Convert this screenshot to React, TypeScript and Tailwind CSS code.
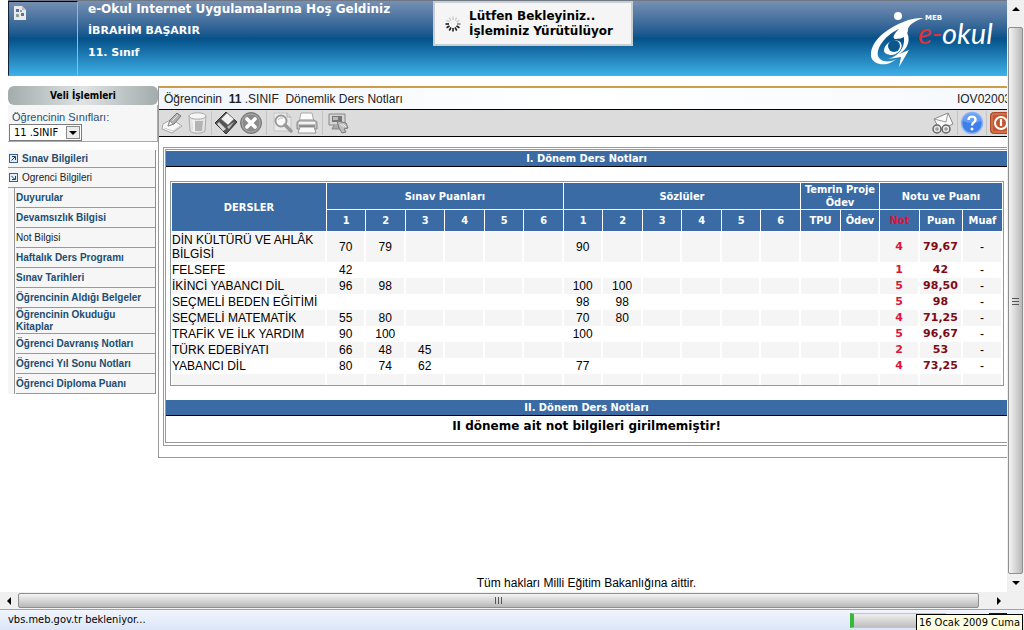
import React from "react";

const TAHOMA = "font-['DejaVu_Sans_Condensed','DejaVu_Sans',sans-serif]";
const VERDANA = "font-['DejaVu_Sans',sans-serif]";

type Grade = {
  course: string;
  exams: string[];
  orals: string[];
  mark: string;
  score: string;
};

const grades: Grade[] = [
  { course: "DİN KÜLTÜRÜ VE AHLÂK BİLGİSİ", exams: ["70", "79"], orals: ["90"], mark: "4", score: "79,67" },
  { course: "FELSEFE", exams: ["42"], orals: [], mark: "1", score: "42" },
  { course: "İKİNCİ YABANCI DİL", exams: ["96", "98"], orals: ["100", "100"], mark: "5", score: "98,50" },
  { course: "SEÇMELİ BEDEN EĞİTİMİ", exams: [], orals: ["98", "98"], mark: "5", score: "98" },
  { course: "SEÇMELİ MATEMATİK", exams: ["55", "80"], orals: ["70", "80"], mark: "4", score: "71,25" },
  { course: "TRAFİK VE İLK YARDIM", exams: ["90", "100"], orals: ["100"], mark: "5", score: "96,67" },
  { course: "TÜRK EDEBİYATI", exams: ["66", "48", "45"], orals: [], mark: "2", score: "53" },
  { course: "YABANCI DİL", exams: ["80", "74", "62"], orals: ["77"], mark: "4", score: "73,25" },
];

const slots = [0, 1, 2, 3, 4, 5];

const subMenu = [
  "Duyurular",
  "Devamsızlık Bilgisi",
  "Not Bilgisi",
  "Haftalık Ders Programı",
  "Sınav Tarihleri",
  "Öğrencinin Aldığı Belgeler",
  "Öğrencinin Okuduğu Kitaplar",
  "Öğrenci Davranış Notları",
  "Öğrenci Yıl Sonu Notları",
  "Öğrenci Diploma Puanı",
];

function Logo() {
  return (
    <svg className="h-[68px] w-[130px]" viewBox="0 0 130 68" role="img" aria-label="MEB e-okul">
      <circle cx="35" cy="15" r="4" fill="#fff" />
      <path d="M61 17C49 16 35 22 25 29C14 36 7 46 8 55C9 63 20 65 27 62L34 58C26 62 17 61 15 55C13 46 24 33 36 28C31 33 29 37 32 38C40 38 45 35 45 28C46 23 54 19 61 17Z" fill="#fff" />
      <path d="M43 30C48 37 46 48 36 53L46 49L36 66L38 56L25 58C36 55 42 47 41 36Z" fill="#fff" />
      <path d="M21 49C22 41 34 36 38 42C41 48 33 55 27 54C23 53 21 52 21 49Z" fill="#fff" />
      <circle cx="31" cy="45" r="6" fill="#0b578d" />
      <text x="62" y="19" fill="#fff" fontSize="7" fontFamily="DejaVu Sans" fontWeight="bold">MEB</text>
      <text x="55" y="43" fontSize="29" fontFamily="Lato, sans-serif" fontStyle="italic">
        <tspan fill="#e0313c">e-</tspan><tspan fill="#fff">okul</tspan>
      </text>
    </svg>
  );
}

function Spinner() {
  const rays = Array.from({ length: 12 }, (_, i) => i);
  return (
    <svg className="h-4 w-4" viewBox="0 0 16 16">
      {rays.map((i) => (
        <line key={i} x1="8" y1="4" x2="8" y2="0.500" stroke="#111" strokeWidth="1.600"
          opacity={i > 3 && i < 10 ? 0.95 : i === 3 ? 0.5 : 0.15} transform={`rotate(${i * 30} 8 8)`} />
      ))}
    </svg>
  );
}

function Icon({ children }: { children: React.ReactNode }) {
  return <svg className="h-6 w-6" viewBox="0 0 24 24">{children}</svg>;
}

const icons = {
  edit: (
    <Icon>
      <path d="M3 13L12 8L22 15L12 22L2 18Z" fill="#f7f7f7" stroke="#a5a5a5" />
      <path d="M4 17L13 20L20 15" fill="none" stroke="#ccc" />
      <path d="M8 15L10 9L17 2L21 5L14 13Z" fill="#b0b0b0" stroke="#777" />
      <path d="M8 15L10 10L13 13Z" fill="#eee" stroke="#888" strokeWidth=".7" />
      <path d="M12 10L18 4" stroke="#ddd" />
    </Icon>
  ),
  bin: (
    <Icon>
      <path d="M4 5L5 20C7 23 18 23 20 20L21 5Z" fill="#e4e4e4" stroke="#aaa" />
      <path d="M7 10H18L17 20H8Z" fill="#b4b4b4" />
      <path d="M7 9L8 21H10V9Z" fill="#f2f2f2" />
      <ellipse cx="12.500" cy="5" rx="8.500" ry="3.200" fill="#f5f5f5" stroke="#aaa" />
    </Icon>
  ),
  save: (
    <Icon>
      <path d="M12 1L23 11L12 23L1 12Z" fill="#555" stroke="#333" />
      <path d="M13 2L20 8L14 14L7 8Z" fill="#f1f1f1" stroke="#777" strokeWidth=".6" />
      <path d="M5 11L12 18L9 20L3 13Z" fill="#d8d8d8" />
      <path d="M17 13L20 11L15 18L13 16Z" fill="#bbb" />
    </Icon>
  ),
  cancel: (
    <Icon>
      <circle cx="12" cy="12" r="10.500" fill="#8b8b8b" stroke="#777" />
      <circle cx="12" cy="12" r="9" fill="none" stroke="#aaa" />
      <path d="M8 8L16 16M16 8L8 16" stroke="#fff" strokeWidth="3.600" strokeLinecap="round" />
    </Icon>
  ),
  preview: (
    <Icon>
      <path d="M4 2H17L21 6V20H4Z" fill="#eaeaea" stroke="#c5c5c5" />
      <path d="M17 2V6H21" fill="none" stroke="#aaa" />
      <circle cx="11" cy="10" r="5.500" fill="#fafafa" stroke="#9a9a9a" strokeWidth="2" />
      <path d="M8 9Q10 6 13 7" fill="none" stroke="#bbb" />
      <path d="M15 14L21 20" stroke="#999" strokeWidth="3.500" strokeLinecap="round" />
    </Icon>
  ),
  print: (
    <Icon>
      <path d="M6 2H17L19 11H4Z" fill="#fbfbfb" stroke="#aaa" />
      <path d="M2 11L5 9H19L22 11V18H2Z" fill="#c2c2c2" stroke="#888" />
      <path d="M4 12H20" stroke="#f3f3f3" strokeWidth="2" />
      <path d="M5 16H19L21 22H3Z" fill="#fafafa" stroke="#999" />
      <path d="M4 15H20" stroke="#666" />
    </Icon>
  ),
  transfer: (
    <Icon>
      <path d="M3 3H19V14H3Z" fill="#d5d5d5" stroke="#888" />
      <path d="M6 5H16V11H6Z" fill="#777" />
      <path d="M7 6H12V9H7Z" fill="#bbb" />
      <path d="M8 14L6 18H14V14" fill="#aaa" stroke="#888" />
      <path d="M11 10L20 12L22 17L18 18L20 21L16 22L13 17Z" fill="#bdbdbd" stroke="#777" />
      <path d="M14 13L18 16M17 13L20 16" stroke="#eee" />
    </Icon>
  ),
  find: (
    <Icon>
      <path d="M3 8L17 2L22 13L9 19Z" fill="#fafafa" stroke="#888" />
      <path d="M3 8L15 11L17 2" fill="none" stroke="#999" />
      <circle cx="6" cy="18" r="4" fill="#e5e5e5" stroke="#666" strokeWidth="1.500" />
      <circle cx="15" cy="18" r="4" fill="#e5e5e5" stroke="#666" strokeWidth="1.500" />
      <path d="M6 16V20M4 18H8M15 16V20M13 18H17" stroke="#888" />
    </Icon>
  ),
  help: (
    <Icon>
      <circle cx="12" cy="12" r="10.500" fill="#3f7fea" stroke="#8bb4f6" strokeWidth="1.500" />
      <path d="M3 10A9 9 0 0 1 21 10Q12 14 3 10Z" fill="#82b0fa" opacity=".6" />
      <path d="M8.500 9C8.500 4.500 15.800 4.500 15.500 9C15.300 11.500 12 11.500 12 14.500" fill="none" stroke="#fff" strokeWidth="2.400" />
      <circle cx="12" cy="18" r="1.500" fill="#fff" />
    </Icon>
  ),
  exit: (
    <Icon>
      <rect x="1.500" y="1.500" width="21" height="21" rx="3" fill="#c2562f" stroke="#a9482a" />
      <rect x="3" y="3" width="18" height="18" rx="2" fill="none" stroke="#dd8a68" />
      <circle cx="12" cy="12" r="6" fill="none" stroke="#fff" strokeWidth="2" />
      <path d="M12 8V15" stroke="#fff" strokeWidth="2.200" />
    </Icon>
  ),
};

function Tool({ label, children }: { label: string; children: React.ReactNode }) {
  return <button type="button" aria-label={label} className="flex h-6 w-6 items-center justify-center">{children}</button>;
}

function Divider() {
  return <span className="block h-6 w-px bg-[#c4c4c4]" />;
}

function Header() {
  return (
    <header className="flex h-[76px] border-t border-[#6f7782] bg-linear-to-b from-[#7790b3] via-[#045289] to-[#3fb2ea] text-white">
      <div className="flex w-[70px] items-start border border-t-black border-r-[#a5b5c5] border-b-transparent border-l-[#10243a] p-1">
        <svg className="h-[14px] w-[13px]" viewBox="0 0 13 14" role="img" aria-label="Fotoğraf">
          <path d="M1 0H9L13 4V14H1Z" fill="#e9e9e9" />
          <path d="M9 0V4H13" fill="#bbb" />
          <path d="M3 3H6V6H3ZM8 7H11V10H8Z" fill="#4a7aa8" />
          <path d="M3 8H6V11H3ZM7 4H9V6H7Z" fill="#8d9c97" />
        </svg>
      </div>
      <div className={`${VERDANA} flex flex-1 flex-col gap-1.5 pl-[10px] text-[11px] leading-4 font-bold`}>
        <p className="text-[12px] leading-4">e-Okul Internet Uygulamalarına Hoş Geldiniz</p>
        <p>İBRAHİM BAŞARIR</p>
        <p>11. Sınıf</p>
      </div>
      <div className="pr-[14px]"><Logo /></div>
    </header>
  );
}

function Marker({ open }: { open?: boolean }) {
  return (
    <svg className="h-[9px] w-[9px] shrink-0" viewBox="0 0 9 9">
      <rect x=".5" y=".5" width="8" height="8" fill="#e3edf7" stroke="#3b5f86" />
      {open ? <path d="M2.500 3L6 6.500M6.500 3V6.500H3" fill="none" stroke="#1d3f6b" /> : <path d="M2.500 6.500L6 3M3 2.500H6.500V6" fill="none" stroke="#1d3f6b" />}
    </svg>
  );
}

function Sidebar() {
  return (
    <aside className="w-[150px] shrink-0">
      <h2 className={`${TAHOMA} flex h-[19px] items-center justify-center rounded-md bg-linear-to-r from-[#a3acac] via-[#dfe4e3] to-[#a3acac] text-[10px] font-bold text-black`}>
        Veli İşlemleri
      </h2>
      <div className="flex h-[37px] flex-col items-start justify-end border-r border-b border-[#aaa] bg-[#f6f6f6] pl-px">
        <label htmlFor="sinif" className="pl-[3px] font-['Liberation_Sans',sans-serif] text-[11px] leading-[13px] text-[#1f4f78]">
          Öğrencinin Sınıfları:
        </label>
        <div className="relative h-[17px] w-[73px]">
          <select id="sinif" className={`${TAHOMA} block h-full w-full appearance-none border border-[#7a7a7a] bg-white pl-1 text-[11px] leading-[13px] text-black`}>
            <option>11 .SINIF</option>
          </select>
          <svg className="pointer-events-none absolute top-0.5 right-0.5 h-[13px] w-[14px]" viewBox="0 0 14 13">
            <rect x=".5" y=".5" width="13" height="12" fill="#ececec" stroke="#888" />
            <path d="M3 5H11L7 9Z" fill="#000" />
          </svg>
        </div>
      </div>
      <nav className="mt-2 mr-0.5 border-r border-[#8f8f8f] bg-[#f6f6f6] font-['Liberation_Sans',sans-serif] text-[10px] leading-3 font-bold text-[#204d72]">
        <a href="#sinav" className="flex h-[18px] items-center gap-1 border-b border-[#999] pl-px">
          <Marker />Sınav Bilgileri
        </a>
        <a href="#ogrenci" className="flex h-5 items-center gap-1 border-b border-[#999] pl-px font-normal text-[#222]">
          <Marker open />Ogrenci Bilgileri
        </a>
        <ul className="ml-[6px] border-l border-[#999] pl-px">
          {subMenu.map((item) => (
            <li key={item}>
              <a
                href="#menu"
                className={
                  item === "Not Bilgisi"
                    ? "flex min-h-5 items-center border-b border-[#999] pt-px font-normal text-[#222]"
                    : "flex min-h-5 items-center border-b border-[#999] pt-px"
                }
              >
                {item}
              </a>
            </li>
          ))}
        </ul>
      </nav>
    </aside>
  );
}

const TH = "border-r border-b border-white p-0 font-bold";

function GradeTable() {
  return (
    <table className="w-full table-fixed border-separate border-spacing-0 border border-[#8f979f] pt-px pl-px font-['Liberation_Sans',sans-serif] text-[12px] leading-[14px] text-black">
      <colgroup>
        <col className="w-[155px]" />
        {slots.map((s) => <col key={`e${s}`} />)}
        {slots.map((s) => <col key={`o${s}`} />)}
        <col className="w-10" />
        <col className="w-[39px]" />
        <col className="w-10" />
        <col className="w-[43px]" />
        <col className="w-10" />
      </colgroup>
      <thead className={`${TAHOMA} bg-[#3a6ba5] text-[11px] leading-[13px] text-white`}>
        <tr className="h-[27px]">
          <th rowSpan={2} className={TH}>DERSLER</th>
          <th colSpan={6} className={TH}>Sınav Puanları</th>
          <th colSpan={6} className={TH}>Sözlüler</th>
          <th colSpan={2} className={TH}>Temrin Proje Ödev</th>
          <th colSpan={3} className={TH}>Notu ve Puanı</th>
        </tr>
        <tr className="h-[22px]">
          {slots.map((s) => <th key={`e${s}`} className={TH}>{s + 1}</th>)}
          {slots.map((s) => <th key={`o${s}`} className={TH}>{s + 1}</th>)}
          <th className={TH}>TPU</th>
          <th className={TH}>Ödev</th>
          <th className={`${TH} text-[#dc143c]`}>Not</th>
          <th className={TH}>Puan</th>
          <th className={TH}>Muaf</th>
        </tr>
      </thead>
      <tbody className="[&_td]:border-r-2 [&_td]:border-white [&_td]:px-0 [&_td]:py-px [&_tr:nth-child(odd)]:bg-[#f5f5f5]">
        {grades.map((g) => (
          <tr key={g.course} className="text-center">
            <td className="text-left">{g.course}</td>
            {slots.map((s) => <td key={`e${s}`}>{g.exams[s]}</td>)}
            {slots.map((s) => <td key={`o${s}`}>{g.orals[s]}</td>)}
            <td />
            <td />
            <td className={`${VERDANA} text-[11px] font-bold text-[#dc143c]`}>{g.mark}</td>
            <td className={`${VERDANA} text-[11px] font-bold text-[#7d0a14]`}>{g.score}</td>
            <td>-</td>
          </tr>
        ))}
        <tr className="h-[11px]">
          {Array.from({ length: 18 }, (_, i) => <td key={i} />)}
        </tr>
      </tbody>
    </table>
  );
}

function TermBar({ children }: { children: React.ReactNode }) {
  return (
    <h3 className={`${TAHOMA} h-4 border-b border-black bg-[#3a6ba5] text-center text-[11px] leading-4 font-bold text-white`}>
      {children}
    </h3>
  );
}

function Main() {
  return (
    <main className="min-w-0 flex-1 overflow-hidden border-b border-l border-[#999]">
      <div className="flex h-[23px] items-center justify-between border-t-2 border-[#d09b48] bg-linear-to-r from-[#f0f6fc] via-white to-[#f6f9fd] pl-[5px] font-['Liberation_Sans',sans-serif] text-[12px] text-[#222]">
        <h1 className="whitespace-pre"><span>Öğrencinin  </span><b>11</b> .SINIF  Dönemlik Ders Notları</h1>
        <span className="-mr-1">IOV02003</span>
      </div>
      <div className="flex h-7 items-center justify-between border-y border-black bg-[#dcdcdc]">
        <div className="flex items-center gap-px pl-px">
          <Tool label="Düzenle">{icons.edit}</Tool>
          <Tool label="Sil">{icons.bin}</Tool>
          <span className="px-px"><Divider /></span>
          <Tool label="Kaydet">{icons.save}</Tool>
          <Tool label="İptal">{icons.cancel}</Tool>
          <span className="px-0.5"><Divider /></span>
          <Tool label="Önizleme">{icons.preview}</Tool>
          <Tool label="Yazdır">{icons.print}</Tool>
          <span className="px-0.5"><Divider /></span>
          <Tool label="Aktar">{icons.transfer}</Tool>
        </div>
        <div className="-mr-1.5 flex items-center gap-0.5">
          <Tool label="Ara">{icons.find}</Tool>
          <Divider />
          <Tool label="Yardım">{icons.help}</Tool>
          <Divider />
          <Tool label="Çıkış">{icons.exit}</Tool>
        </div>
      </div>
      <div className="mt-[10px] mb-[11px] ml-1 border border-r-0 border-[#999] pt-px pb-0.5 pl-px">
        <div className="border border-r-0 border-[#999] pt-px pb-2">
          <TermBar>I. Dönem Ders Notları</TermBar>
          <div className="pt-[14px] pr-[3px] pb-[14px] pl-1">
            <GradeTable />
          </div>
          <TermBar>II. Dönem Ders Notları</TermBar>
          <p className={`${VERDANA} pt-0.5 text-center text-[12px] leading-4 font-bold text-black`}>
            II döneme ait not bilgileri girilmemiştir!
          </p>
        </div>
      </div>
    </main>
  );
}

function WaitBox() {
  return (
    <div role="status" className={`${VERDANA} absolute top-px left-[433px] flex h-[45px] w-[200px] items-center gap-2 border-2 border-[#c9ced3] bg-[#f5f5f5] pl-[10px] text-[12px] leading-[15px] font-bold text-black`}>
      <Spinner />
      <p>Lütfen Bekleyiniz..<br />İşleminiz Yürütülüyor</p>
    </div>
  );
}

function Arrow({ d, className }: { d: string; className: string }) {
  return (
    <button type="button" aria-label="Kaydır" className={`flex items-center justify-center ${className}`}>
      <svg className="h-2 w-2" viewBox="0 0 8 8"><path d={d} fill="#000" /></svg>
    </button>
  );
}

export default function App() {
  return (
    <div className="relative flex h-screen flex-col overflow-hidden bg-white">
      <div className="flex min-h-0 flex-1">
        <div className="flex min-w-0 flex-1 flex-col overflow-hidden pl-2">
          <Header />
          <div className="mt-[10px] flex items-start">
            <Sidebar />
            <Main />
          </div>
          <footer className="mt-auto pb-px pl-[158px] text-center font-['Liberation_Sans',sans-serif] text-[12px] leading-4 text-black">
            Tüm hakları Milli Eğitim Bakanlığına aittir.
          </footer>
        </div>
        <div className="flex w-[17px] flex-col bg-[#f0f0f0]">
          <Arrow d="M0 6L4 2L8 6Z" className="h-[18px] w-full" />
          <div className="mx-px mt-[9px] flex flex-1 items-center justify-center rounded-xs border border-[#8e8e8e] bg-linear-to-r from-[#f4f4f4] via-[#d6d6d6] to-[#b8b8b8]">
            <svg className="h-2 w-[7px]" viewBox="0 0 7 8"><path d="M0 1.500H7M0 4.500H7M0 7.500H7" stroke="#555" /></svg>
          </div>
          <Arrow d="M0 2L4 6L8 2Z" className="h-[18px] w-full" />
        </div>
      </div>
      <div className="flex h-[17px] bg-[#f0f0f0]">
        <Arrow d="M6 0L2 4L6 8Z" className="w-[18px]" />
        <div className="my-px flex flex-1 items-center justify-center rounded-xs border border-[#8e8e8e] bg-linear-to-b from-[#f4f4f4] via-[#d6d6d6] to-[#b8b8b8]">
          <svg className="h-[7px] w-2" viewBox="0 0 8 7"><path d="M.5 0V7M3.500 0V7M6.500 0V7" stroke="#555" /></svg>
        </div>
        <Arrow d="M2 0L6 4L2 8Z" className="mr-[17px] ml-[11px] w-[17px]" />
      </div>
      <div className={`${TAHOMA} flex h-[21px] items-center justify-between border-t border-[#a0a4aa] bg-linear-to-b from-[#f1f5fc] to-[#dbe6f7] pl-2 text-[11px] text-black`}>
        <span>vbs.meb.gov.tr bekleniyor...</span>
        <div className="mr-[17px] flex h-[15px] w-[157px] items-start justify-between">
          <div className="h-full w-[96px] border border-l-4 border-[#c2c2c2] border-l-[#38b838] bg-linear-to-b from-[#efefef] to-[#bfbfbf]" />
          <span className="h-1 w-[18px] bg-[#25102f]" />
        </div>
      </div>
      <WaitBox />
      <div role="tooltip" className={`${TAHOMA} absolute right-px bottom-0 flex h-4 items-center border border-b-0 border-black bg-[#ffffe1] px-0.5 text-[11px] leading-3 whitespace-nowrap text-black`}>
        16 Ocak 2009 Cuma
      </div>
    </div>
  );
}
